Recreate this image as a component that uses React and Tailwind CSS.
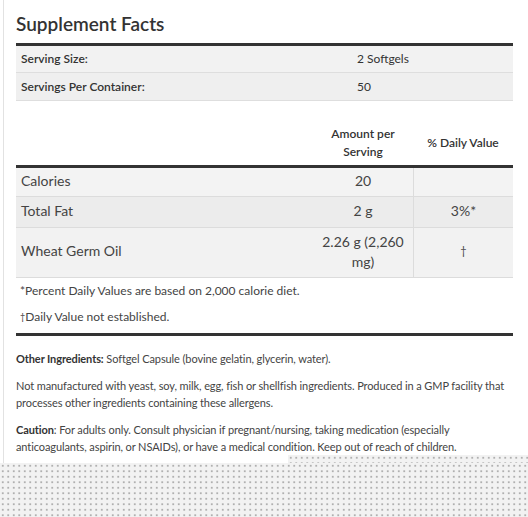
export default function App() {
  const font = { fontFamily: 'Lato, "Noto Sans", sans-serif' };
  return (
    <div className="relative w-[528px] h-[517px] overflow-hidden bg-white text-[#444]" style={font}>
      <div className="absolute left-[3px] top-0 bottom-0 w-px bg-[#e2e2e2]" />
      <div className="pl-4 pr-[15px] pt-[12px]">
        <h2 className="text-[19px] leading-[24px] font-semibold text-[#333] h-[31px]">Supplement Facts</h2>
        <div className="border-t-[3px] border-[#333]">
          <div className="flex h-[27px] items-center bg-[#f2f2f2] border-b border-[#dedede] text-[12px] text-[#333]">
            <div className="w-[341px] pl-[5px] font-semibold">Serving Size:</div>
            <div>2 Softgels</div>
          </div>
          <div className="flex h-[28px] items-center bg-[#efefef] border-b border-[#dedede] text-[12px] text-[#333]">
            <div className="w-[341px] pl-[5px] font-semibold">Servings Per Container:</div>
            <div>50</div>
          </div>
        </div>
        <div className="mt-[21px] flex items-center h-[43px] pb-[1px] text-[12px] leading-[18px] font-semibold text-[#333]">
          <div className="w-[297px]" />
          <div className="w-[100px] text-center">Amount per<br />Serving</div>
          <div className="w-[100px] text-center">% Daily Value</div>
        </div>
        <div className="border-t-[3px] border-[#333] text-[14px] text-[#444]">
          <div className="flex h-[29px] pb-[3px] bg-[#f3f3f3] border-b border-[#dcdcdc]">
            <div className="w-[297px] pl-[5px] flex items-center">Calories</div>
            <div className="w-[100px] flex items-center justify-center">20</div>
            <div className="w-[100px] border-l border-[#dcdcdc] -mb-[3px]" />
          </div>
          <div className="flex h-[31px] bg-[#ececec] border-b border-[#dcdcdc]">
            <div className="w-[297px] pl-[5px] pb-[3px] flex items-center">Total Fat</div>
            <div className="w-[100px] pb-[3px] flex items-center justify-center">2 g</div>
            <div className="w-[100px] pb-[3px] border-l border-[#dcdcdc] flex items-center justify-center">3%*</div>
          </div>
          <div className="flex h-[50px] bg-[#f2f2f2] border-b border-[#dcdcdc] leading-[20px]">
            <div className="w-[297px] pl-[5px] pb-[3px] flex items-center">Wheat Germ Oil</div>
            <div className="w-[100px] px-[6px] pb-[2px] flex items-center justify-center text-center">2.26 g (2,260 mg)</div>
            <div className="w-[100px] pb-[3px] border-l border-[#dcdcdc] flex items-center justify-center text-[11px]">†</div>
          </div>
        </div>
        <div className="text-[12px] leading-[26px] pl-[4px] pb-[3px] text-[#444]">
          <p>*Percent Daily Values are based on 2,000 calorie diet.</p>
          <p><span className="text-[9px] align-top">†</span>Daily Value not established.</p>
        </div>
        <div className="border-t-[3px] border-[#333]" />
        <div className="text-[11px] leading-[17px] tracking-[-0.1px] text-[#444] pt-[14px]">
          <p><span className="font-bold text-[#333]">Other Ingredients:</span> Softgel Capsule (bovine gelatin, glycerin, water).</p>
          <p className="mt-[10px]">Not manufactured with yeast, soy, milk, egg, fish or shellfish ingredients. Produced in a GMP facility that processes other ingredients containing these allergens.</p>
          <p className="mt-[10px]"><span className="font-bold text-[#333]">Caution</span>: For adults only. Consult physician if pregnant/nursing, taking medication (especially anticoagulants, aspirin, or NSAIDs), or have a medical condition. Keep out of reach of children.</p>
        </div>
      </div>
      <div className="absolute left-[288px] right-0 top-[455px] h-[8px] bg-[#f2f2f2] bg-[radial-gradient(circle,#b0b0b0_0.8px,transparent_1.2px)] bg-[length:5.5px_5.5px]" />
      <div className="absolute left-0 right-0 top-[463px] bottom-0 bg-[#f2f2f2] bg-[radial-gradient(circle,#b0b0b0_0.8px,transparent_1.2px)] bg-[length:5.5px_5.5px]" />
    </div>
  );
}
